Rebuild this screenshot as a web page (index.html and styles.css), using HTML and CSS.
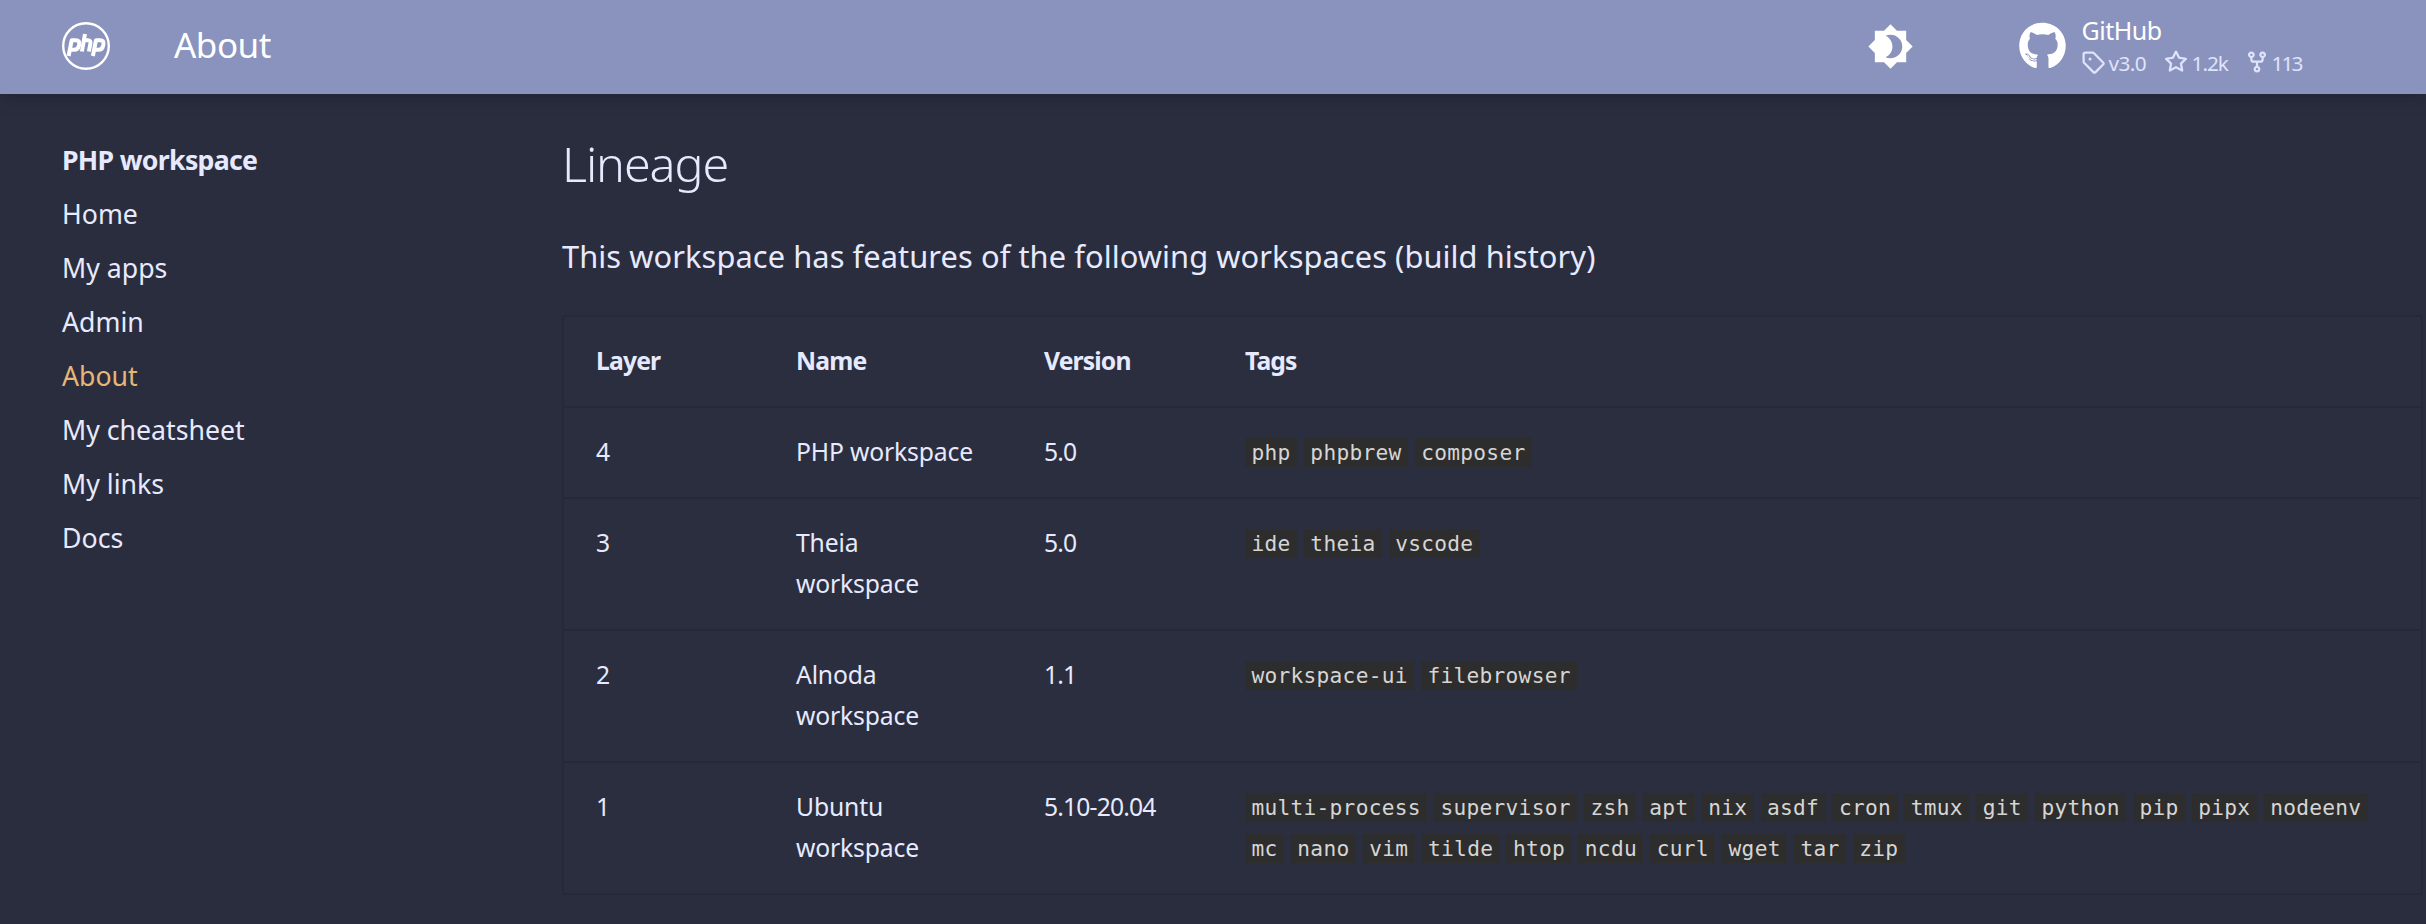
FILE: index.html
```html
<!DOCTYPE html>
<html lang="en">
<head>
<meta charset="utf-8">
<title>About</title>
<link rel="stylesheet" href="styles.css">
</head>
<body>
<header class="header">
  <svg class="logo" viewBox="0 0 48 48" fill="none" stroke="#fff">
    <circle cx="24" cy="24" r="22.8" stroke-width="2.4"/>
    <g stroke-width="4" stroke-linejoin="round">
      <path d="M6.6 34 9.7 18.2h4.2q4 0 3.2 4.2l-.3 1.4q-.8 4-4.8 4H8.4"/>
      <path d="M23 12 19.9 29.5M22 18.2h3.7q3.4 0 2.7 3.4L26.9 29.5"/>
      <path d="M30.9 34 34 18.2h4.2q4 0 3.2 4.2l-.3 1.4q-.8 4-4.8 4h-4"/>
    </g>
  </svg>
  <div class="header-title">About</div>
  <svg class="theme" viewBox="0 0 24 24"><path fill="#fff" d="M12 18c-.89 0-1.74-.2-2.5-.55C11.56 16.5 13 14.42 13 12c0-2.42-1.44-4.5-3.5-5.45C10.26 6.2 11.11 6 12 6a6 6 0 0 1 6 6 6 6 0 0 1-6 6m8-9.31V4h-4.69L12 .69 8.69 4H4v4.69L.69 12 4 15.31V20h4.69L12 23.31 15.31 20H20v-4.69L23.31 12 20 8.69z"/></svg>
  <div class="source">
    <svg class="github" viewBox="0 0 496 512"><path fill="#fff" d="M244.8 8C106.1 8 0 113.3 0 252c0 110.9 69.8 205.8 169.5 239.2 12.8 2.3 17.3-5.6 17.3-12.1 0-6.2-.3-40.4-.3-61.4 0 0-70 15-84.7-29.8 0 0-11.4-29.1-27.8-36.6 0 0-22.9-15.7 1.6-15.4 0 0 24.9 2 38.6 25.8 21.9 38.6 58.6 27.5 72.9 20.9 2.3-16 8.8-27.1 16-33.7-55.9-6.2-112.3-14.3-112.3-110.5 0-27.5 7.6-41.3 23.6-58.9-2.6-6.5-11.1-33.3 3-68 20.9-6.5 69 27 69 27 20-5.6 41.5-8.5 62.8-8.5s42.8 2.9 62.8 8.5c0 0 48.1-33.6 69-27 13 34.7 5.6 61.5 3 68 16 17.7 25.8 31.5 25.8 58.9 0 96.5-58.9 104.2-114.8 110.5 9.2 7.9 17 22.9 17 46.4 0 33.7-.3 75.4-.3 83.6 0 6.5 4.6 14.4 17.3 12.1C428.2 457.8 496 362.9 496 252 496 113.3 383.5 8 244.8 8z"/><path fill="none" stroke="#fff" stroke-width="11" d="M88 346q17 52 60 58 22 2 38-5"/></svg>
    <div class="repo">
      <div class="repo-name">GitHub</div>
      <div class="facts">
        <span class="fact fact-tag"><svg class="fact-icon" viewBox="0 0 16 16"><path d="M1 7.775V2.75C1 1.784 1.784 1 2.75 1h5.025c.464 0 .91.184 1.238.513l6.25 6.25a1.75 1.75 0 0 1 0 2.474l-5.026 5.026a1.75 1.75 0 0 1-2.474 0l-6.25-6.25A1.752 1.752 0 0 1 1 7.775Zm1.5 0c0 .066.026.13.073.177l6.25 6.25a.25.25 0 0 0 .354 0l5.025-5.025a.25.25 0 0 0 0-.354l-6.25-6.25a.25.25 0 0 0-.177-.073H2.75a.25.25 0 0 0-.25.25ZM6 5a1 1 0 1 1 0 2 1 1 0 0 1 0-2Z"/></svg>v3.0</span>
        <span class="fact fact-star"><svg class="fact-icon" viewBox="0 0 16 16"><path d="M8 .25a.75.75 0 0 1 .673.418l1.882 3.815 4.21.612a.75.75 0 0 1 .416 1.279l-3.046 2.97.719 4.192a.751.751 0 0 1-1.088.791L8 12.347l-3.766 1.98a.75.75 0 0 1-1.088-.79l.72-4.194L.818 6.374a.75.75 0 0 1 .416-1.28l4.21-.611L7.327.668A.75.75 0 0 1 8 .25Zm0 2.445L6.615 5.5a.75.75 0 0 1-.564.41l-3.097.45 2.24 2.184a.75.75 0 0 1 .216.664l-.528 3.084 2.769-1.456a.75.75 0 0 1 .698 0l2.77 1.456-.53-3.084a.75.75 0 0 1 .216-.664l2.24-2.183-3.096-.45a.75.75 0 0 1-.564-.41L8 2.694Z"/></svg>1.2k</span>
        <span class="fact fact-fork"><svg class="fact-icon" viewBox="0 0 16 16"><path d="M5 5.372v.878c0 .414.336.75.75.75h4.5a.75.75 0 0 0 .75-.75v-.878a2.25 2.25 0 1 1 1.5 0v.878a2.25 2.25 0 0 1-2.25 2.25h-1.5v2.128a2.251 2.251 0 1 1-1.5 0V8.5h-1.5A2.25 2.25 0 0 1 3.5 6.25v-.878a2.25 2.25 0 1 1 1.5 0ZM5 3.25a.75.75 0 1 0-1.5 0 .75.75 0 0 0 1.5 0Zm6.75.75a.75.75 0 1 0 0-1.5.75.75 0 0 0 0 1.5Zm-3 8.75a.75.75 0 1 0-1.5 0 .75.75 0 0 0 1.5 0Z"/></svg>113</span>
      </div>
    </div>
  </div>
</header>
<div class="page">
  <nav class="nav">
    <div class="nav-title">PHP workspace</div>
    <a>Home</a><a>My apps</a><a>Admin</a><a class="active">About</a><a>My cheatsheet</a><a>My links</a><a>Docs</a>
  </nav>
  <main class="main">
    <h1>Lineage</h1>
    <p class="intro">This workspace has features of the following workspaces (build history)</p>
    <div class="table">
      <div class="row head"><div>Layer</div><div>Name</div><div>Version</div><div>Tags</div></div>
      <div class="row"><div>4</div><div>PHP workspace</div><div class="version">5.0</div><div class="tags"><code>php</code><code>phpbrew</code><code>composer</code></div></div>
      <div class="row tall"><div>3</div><div>Theia<br>workspace</div><div class="version">5.0</div><div class="tags"><code>ide</code><code>theia</code><code>vscode</code></div></div>
      <div class="row tall"><div>2</div><div>Alnoda<br>workspace</div><div class="version">1.1</div><div class="tags"><code>workspace-ui</code><code>filebrowser</code></div></div>
      <div class="row tall"><div>1</div><div>Ubuntu<br>workspace</div><div class="version">5.10-20.04</div><div class="tags"><code>multi-process</code><code>supervisor</code><code>zsh</code><code>apt</code><code>nix</code><code>asdf</code><code>cron</code><code>tmux</code><code>git</code><code>python</code><code>pip</code><code>pipx</code><code>nodeenv</code><code>mc</code><code>nano</code><code>vim</code><code>tilde</code><code>htop</code><code>ncdu</code><code>curl</code><code>wget</code><code>tar</code><code>zip</code></div></div>
    </div>
  </main>
</div>
</body>
</html>
```
FILE: styles.css
```css
* { box-sizing: border-box; }
body {
  margin: 0;
  height: 924px;
  overflow: hidden;
  background: #2a2d3e;
  color: #e7eaff;
  font-family: "Noto Sans", sans-serif;
}
.header {
  display: flex;
  height: 94px;
  padding-left: 62px;
  background: #8a93bd;
  color: #fff;
  box-shadow: 0 0 8px rgba(0, 0, 0, .1), 0 8px 16px rgba(0, 0, 0, .1);
}
.logo { width: 48px; height: 48px; margin-top: 22px; }
.header-title {
  width: 1693px;
  margin-left: 64px;
  font-size: 35px;
  line-height: 90px;
  letter-spacing: -.5px;
}
.theme { width: 47px; height: 47px; margin-top: 22.5px; flex: none; margin-left: -.5px; }
.source { display: flex; margin-left: 105px; }
.github { width: 47px; height: 48px; margin-top: 21.5px; flex: none; }
.repo { margin-left: 16px; padding-top: 13px; }
.repo-name { font-size: 25px; line-height: 35px; height: 36px; letter-spacing: -.5px; }
.facts { display: flex; color: #dfe3fb; font-size: 20.8px; line-height: 29px; }
.fact { display: flex; width: 83px; letter-spacing: -.6px; }
.fact-star { width: 81px; letter-spacing: -1px; }
.fact-fork { width: 70px; letter-spacing: -1.9px; }
.fact-icon { width: 24px; height: 24px; margin: 1px 3px 0 -1px; fill: currentColor; }
.fact-tag .fact-icon, .fact-star .fact-icon { margin-right: 4px; }
.page { display: flex; }
.nav {
  display: flex;
  flex-direction: column;
  width: 562px;
  padding: 39px 0 0 62px;
  font-size: 26.7px;
  line-height: 54px;
}
.nav-title { font-weight: 700; letter-spacing: -.7px; }
.nav .active { color: #e6b677; }
.main { width: 1861px; }
h1 {
  margin: 0;
  padding-top: 31px;
  font-size: 48.5px;
  font-weight: 300;
  line-height: 76px;
  letter-spacing: -1.1px;
}
.intro { margin: 29px 0 0; font-size: 30.8px; line-height: 52px; letter-spacing: .08px; }
.table {
  margin-top: 33px;
  border: 2px solid #26293a;
  border-radius: 4px;
  background: #2b2e3e;
  font-size: 24.7px;
  line-height: 41px;
  letter-spacing: -.15px;
}
.row {
  display: grid;
  grid-template-columns: 200px 248px 201px 1fr;
  height: 91px;
  padding: 23px 32px 0;
  border-top: 2px solid #26293a;
}
.row:first-child { height: 89px; border-top: 0; }
.tall { height: 132px; }
.head { font-weight: 700; letter-spacing: -.85px; }
.version { letter-spacing: -.85px; }
.tags { display: flex; flex-wrap: wrap; align-content: flex-start; gap: 12px 6.8px; padding-top: 7px; }
code {
  height: 29px;
  padding: 0 6.5px;
  border-radius: 3px;
  background: #2d2d2d;
  color: #d5d5d5;
  font: 21.2px/29px "DejaVu Sans Mono", monospace;
  letter-spacing: .26px;
}
```
